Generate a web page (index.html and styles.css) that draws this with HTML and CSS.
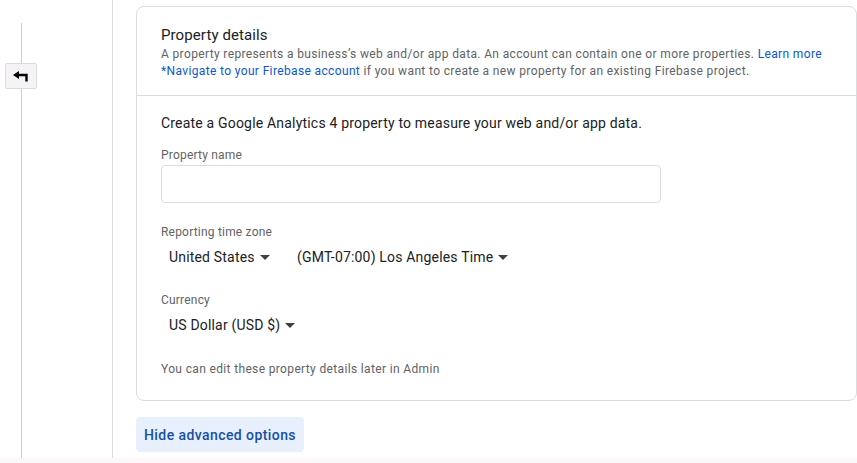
FILE: index.html
```html
<!DOCTYPE html>
<html>
<head>
<meta charset="utf-8">
<link rel="stylesheet" href="styles.css">
</head>
<body>
<div class="page">
  <aside class="rail">
    <div class="rail-track">
      <div class="seg seg-top"></div>
      <button class="back-btn" aria-label="Back">
        <svg width="16" height="11" viewBox="0 0 16 11">
          <path d="M0 4 L6 0 L6 8 Z" fill="#000"/>
          <path d="M5 4 H13.5 V10.5" fill="none" stroke="#000" stroke-width="2.4"/>
        </svg>
      </button>
      <div class="seg seg-bottom"></div>
    </div>
  </aside>
  <main class="main">
    <section class="card">
      <header class="card-head">
        <h2 class="title">Property details</h2>
        <p class="desc">A property represents a business’s web and/or app data. An account can contain one or more properties. <a class="link">Learn more</a></p>
        <p class="desc"><a class="link">*Navigate to your Firebase account</a> if you want to create a new property for an existing Firebase project.</p>
      </header>
      <div class="card-body">
        <p class="lead">Create a Google Analytics 4 property to measure your web and/or app data.</p>
        <label class="label label-first">Property name</label>
        <div class="input"></div>
        <label class="label label-tz">Reporting time zone</label>
        <div class="selects">
          <span class="select sel-country">United States <span class="caret"></span></span>
          <span class="select">(GMT-07:00) Los Angeles Time <span class="caret"></span></span>
        </div>
        <label class="label label-cur">Currency</label>
        <div class="selects">
          <span class="select">US Dollar (USD $) <span class="caret"></span></span>
        </div>
        <p class="note">You can edit these property details later in Admin</p>
      </div>
    </section>
    <button class="adv-btn">Hide advanced options</button>
  </main>
</div>
<div class="band"></div>
</body>
</html>
```

FILE: styles.css
```css
html, body {
  margin: 0;
  padding: 0;
  height: 100%;
  overflow: hidden;
}
body {
  background: #fff;
  font-family: Roboto, "Liberation Sans", Arial, sans-serif;
  color: #202124;
  display: flex;
  flex-direction: column;
}
.page {
  height: 458px;
  display: flex;
  flex-shrink: 0;
}
.band {
  flex: 1;
  background: #fdf7fb;
}
.rail {
  width: 112px;
  border-right: 1px solid #dadce0;
  flex-shrink: 0;
}
.rail-track {
  width: 32px;
  margin-left: 5px;
  height: 100%;
  display: flex;
  flex-direction: column;
  align-items: center;
}
.seg {
  width: 1px;
  background: #cfcfcf;
}
.seg-top {
  margin-top: 23px;
  height: 40px;
}
.seg-bottom {
  flex: 1;
}
.back-btn {
  width: 32px;
  height: 26px;
  padding: 0;
  border: 1px solid #dadce0;
  border-radius: 2px;
  background: #f6f3f6;
  display: flex;
  align-items: center;
  justify-content: center;
}
.main {
  flex: 1;
  padding: 6px 0 0 23px;
  min-width: 0;
}
.card {
  width: 721px;
  box-sizing: border-box;
  border: 1px solid #dadce0;
  border-radius: 8px;
}
.card-head {
  padding: 18px 24px 15px;
  border-bottom: 1px solid #dadce0;
}
.title {
  margin: 0;
  font-size: 15px;
  font-weight: 400;
  line-height: 21px;
  color: #202124;
  letter-spacing: 0.1px;
}
.desc {
  margin: 0;
  font-size: 12px;
  line-height: 17px;
  color: #5f6368;
  letter-spacing: 0.36px;
  white-space: nowrap;
}
.link {
  color: #0b57d0;
}
.card-body {
  padding: 17px 24px 23px;
  display: flex;
  flex-direction: column;
  align-items: flex-start;
}
.lead {
  margin: 0;
  font-size: 14px;
  line-height: 20px;
  color: #202124;
  letter-spacing: 0.19px;
}
.label {
  font-size: 12px;
  line-height: 16px;
  color: #5f6368;
  letter-spacing: 0.2px;
}
.label-first { margin-top: 14px; }
.label-tz { margin-top: 21px; }
.label-cur { margin-top: 24px; }
.input {
  margin-top: 2px;
  width: 500px;
  height: 38px;
  box-sizing: border-box;
  border: 1px solid #dadce0;
  border-radius: 4px;
}
.selects {
  margin-top: 7px;
  display: flex;
}
.select {
  font-size: 14px;
  line-height: 20px;
  color: #202124;
  padding-left: 8px;
  display: inline-flex;
  align-items: center;
  gap: 2px;
  letter-spacing: 0.18px;
}
.sel-country {
  width: 120px;
}
.caret {
  display: inline-block;
  width: 0;
  height: 0;
  border-left: 5px solid transparent;
  border-right: 5px solid transparent;
  border-top: 5px solid #3c4043;
  margin-left: 3px;
}
.label-cur { margin-top: 25px; }
.note {
  margin: 25px 0 0;
  font-size: 12px;
  line-height: 16px;
  color: #5f6368;
  letter-spacing: 0.35px;
}
.note { margin-top: 26px; }
.adv-btn {
  margin-top: 16px;
  height: 35px;
  padding: 0 8px;
  border: none;
  border-radius: 4px;
  background: #e8f0fe;
  color: #174ea6;
  font-family: Roboto, "Liberation Sans", Arial, sans-serif;
  font-size: 14px;
  font-weight: 500;
  letter-spacing: 0.42px;
}
```
